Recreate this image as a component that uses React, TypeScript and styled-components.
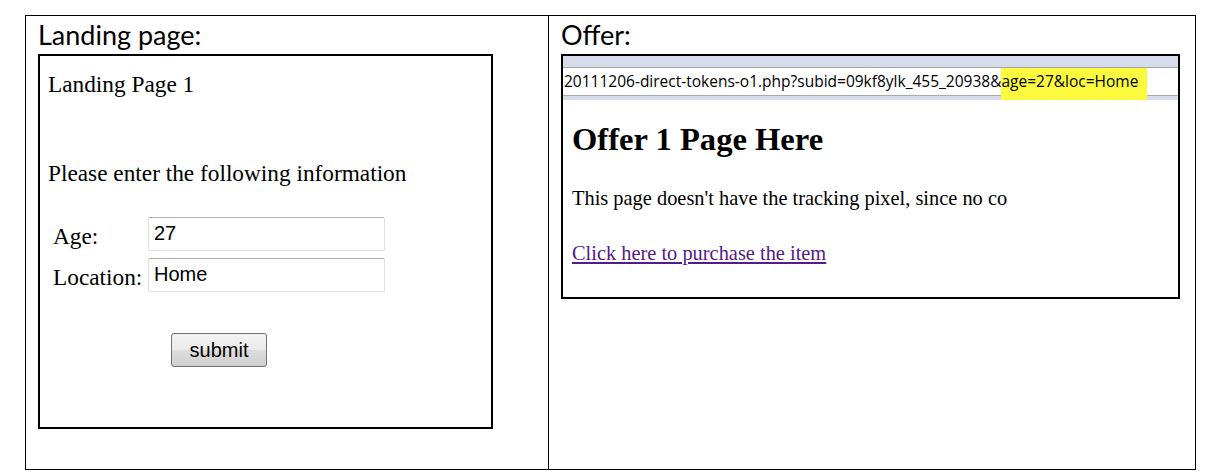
import React from "react";
import styled, { createGlobalStyle } from "styled-components";

const GlobalStyle = createGlobalStyle`
  html, body {
    margin: 0;
    padding: 0;
    background: #ffffff;
  }
`;

const Table = styled.div`
  margin: 15px 0 0 25px;
  width: 1171px;
  height: 455px;
  box-sizing: border-box;
  border: 1px solid #000;
  display: grid;
  grid-template-columns: 522px 1fr;
`;

const Cell = styled.div<{ $divider?: boolean; $pad: number }>`
  border-left: ${(p) => (p.$divider ? "1px solid #000" : "none")};
  padding-left: ${(p) => p.$pad}px;
  display: flex;
  flex-direction: column;
`;

const Caption = styled.div`
  font-family: Lato, "Open Sans", sans-serif;
  font-size: 27px;
  line-height: 38px;
  height: 38px;
  color: #000;
`;

const Frame = styled.div<{ $w: number; $h: number }>`
  width: ${(p) => p.$w}px;
  height: ${(p) => p.$h}px;
  box-sizing: border-box;
  border: 2px solid #000;
  background: #fff;
  overflow: hidden;
`;

const Landing = styled.div`
  padding: 15px 0 0 8px;
  font-family: "Liberation Serif", "Times New Roman", serif;
  font-size: 23.3px;
  line-height: 26px;
  color: #000;
`;

const Line = styled.div<{ $top: number }>`
  margin-top: ${(p) => p.$top}px;
`;

const Form = styled.div`
  margin: 31px 0 0 5px;
  display: grid;
  grid-template-columns: 95px 237px;
  row-gap: 7px;
  align-items: center;
`;

const Label = styled.span`
  padding-top: 3px;
`;

const Input = styled.div`
  height: 34px;
  box-sizing: border-box;
  border: 1px solid #dde1e7;
  border-top-color: #abadb3;
  border-radius: 2px;
  padding-left: 5px;
  font-family: "Liberation Sans", Arial, sans-serif;
  font-size: 20px;
  line-height: 31px;
  color: #000;
`;

const Submit = styled.div`
  margin: 41px 0 0 123px;
  width: 96px;
  height: 34px;
  box-sizing: border-box;
  border: 1px solid #707070;
  border-radius: 3px;
  background: linear-gradient(#f3f3f3 0%, #ebebeb 50%, #dddddd 51%, #cfcfcf 100%);
  font-family: "Liberation Sans", Arial, sans-serif;
  font-size: 20px;
  line-height: 32px;
  text-align: center;
  color: #000;
`;

const UrlTop = styled.div`
  height: 11px;
  background: #d6dcec;
  border-bottom: 1px solid #a6a6a6;
`;

const UrlRow = styled.div`
  height: 32px;
  display: flex;
  align-items: stretch;
  white-space: nowrap;
  background: linear-gradient(
    to bottom,
    #ffffff 0 27px,
    #a9a9a9 27px 28px,
    #d6dcec 28px 32px
  );
  font-family: "Open Sans", "Noto Sans", sans-serif;
  font-size: 15.5px;
  line-height: 27px;
  color: #000;
`;

const UrlText = styled.span`
  padding-left: 1px;
`;

const Mark = styled.span`
  background: #fbfa3f;
  padding-right: 9px;
`;

const Offer = styled.div`
  padding: 0 0 0 9px;
  font-family: "Liberation Serif", "Times New Roman", serif;
  font-size: 20.4px;
  line-height: 24px;
  color: #000;
`;

const Heading = styled.h1`
  margin: 20px 0 0 0;
  font-size: 32.6px;
  line-height: 38px;
  font-weight: bold;
`;

const Para = styled.p`
  margin: 28px 0 0 0;
`;

const Link = styled.a`
  display: block;
  margin-top: 31px;
  color: #551a8b;
  text-decoration: underline;
`;

export default function App() {
  return (
    <>
      <GlobalStyle />
      <Table>
        <Cell $pad={12}>
          <Caption>Landing page:</Caption>
          <Frame $w={455} $h={375}>
            <Landing>
              <Line $top={0}>Landing Page 1</Line>
              <Line $top={63}>Please enter the following information</Line>
              <Form>
                <Label>Age:</Label>
                <Input>27</Input>
                <Label>Location:</Label>
                <Input>Home</Input>
              </Form>
              <Submit>submit</Submit>
            </Landing>
          </Frame>
        </Cell>
        <Cell $divider $pad={12}>
          <Caption>Offer:</Caption>
          <Frame $w={619} $h={245}>
            <UrlTop />
            <UrlRow>
              <UrlText>20111206-direct-tokens-o1.php?subid=09kf8ylk_455_20938&amp;</UrlText>
              <Mark>age=27&amp;loc=Home</Mark>
            </UrlRow>
            <Offer>
              <Heading>Offer 1 Page Here</Heading>
              <Para>This page doesn't have the tracking pixel, since no co</Para>
              <Link href="#">Click here to purchase the item</Link>
            </Offer>
          </Frame>
        </Cell>
      </Table>
    </>
  );
}
